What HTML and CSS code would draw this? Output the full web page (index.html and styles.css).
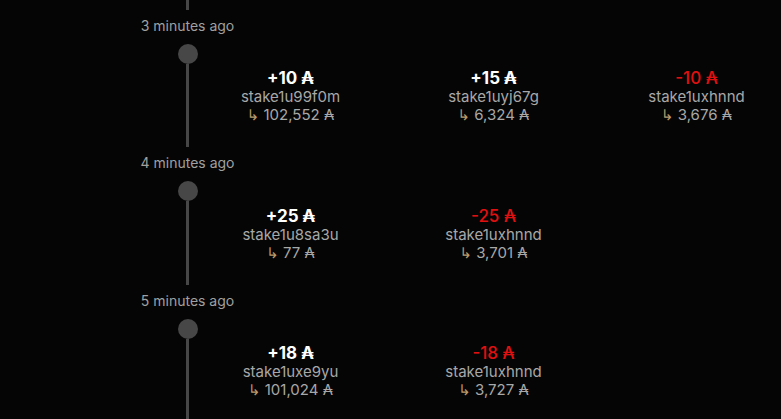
FILE: index.html
```html
<!DOCTYPE html>
<html>
  <head>
    <meta charset="UTF-8" />
    <meta name="viewport" content="width=device-width, initial-scale=1.0" />
    <title>Transfers</title>
    <link rel="stylesheet" href="styles.css">
  </head>
  <body>
    <section class="feed">
      <div class="tail"></div>

      <div class="event">
        <div class="stamp">3 minutes ago</div>
        <div class="body">
          <div class="rail"><div class="dot"></div><div class="line"></div></div>
          <div class="txs">
            <div class="tx">
              <div class="amount">+10 ₳</div>
              <div class="addr">stake1u99f0m</div>
              <div class="balance"><span class="arrow">↳</span> 102,552 ₳</div>
            </div>
            <div class="tx">
              <div class="amount">+15 ₳</div>
              <div class="addr">stake1uyj67g</div>
              <div class="balance"><span class="arrow">↳</span> 6,324 ₳</div>
            </div>
            <div class="tx">
              <div class="amount neg">-10 ₳</div>
              <div class="addr">stake1uxhnnd</div>
              <div class="balance"><span class="arrow">↳</span> 3,676 ₳</div>
            </div>
          </div>
        </div>
      </div>

      <div class="event">
        <div class="stamp">4 minutes ago</div>
        <div class="body">
          <div class="rail"><div class="dot"></div><div class="line"></div></div>
          <div class="txs">
            <div class="tx">
              <div class="amount">+25 ₳</div>
              <div class="addr">stake1u8sa3u</div>
              <div class="balance"><span class="arrow">↳</span> 77 ₳</div>
            </div>
            <div class="tx">
              <div class="amount neg">-25 ₳</div>
              <div class="addr">stake1uxhnnd</div>
              <div class="balance"><span class="arrow">↳</span> 3,701 ₳</div>
            </div>
          </div>
        </div>
      </div>

      <div class="event">
        <div class="stamp">5 minutes ago</div>
        <div class="body">
          <div class="rail"><div class="dot"></div><div class="line"></div></div>
          <div class="txs">
            <div class="tx">
              <div class="amount">+18 ₳</div>
              <div class="addr">stake1uxe9yu</div>
              <div class="balance"><span class="arrow">↳</span> 101,024 ₳</div>
            </div>
            <div class="tx">
              <div class="amount neg">-18 ₳</div>
              <div class="addr">stake1uxhnnd</div>
              <div class="balance"><span class="arrow">↳</span> 3,727 ₳</div>
            </div>
          </div>
        </div>
      </div>
    </section>
  </body>
</html>
```

FILE: styles.css
```css
* {
  margin: 0;
  padding: 0;
  box-sizing: border-box;
}

html,
body {
  background: #050505;
}

body {
  font-family: Inter, "Noto Sans", sans-serif;
  color: #a6a6a6;
  overflow: hidden;
}

.tail {
  width: 3px;
  height: 9.5px;
  margin-left: 186px;
  background: #474747;
}

.event {
  display: flex;
  flex-direction: column;
}

.stamp {
  width: 375px;
  margin-top: 7px;
  text-align: center;
  font-size: 14px;
  line-height: 17px;
  color: #a0a0a0;
}

.body {
  display: flex;
  margin-top: 10px;
}

.rail {
  width: 3px;
  margin-left: 186px;
  display: flex;
  flex-direction: column;
  align-items: center;
}

.dot {
  width: 20px;
  height: 20px;
  flex-shrink: 0;
  border-radius: 50%;
  background: #474747;
}

.line {
  width: 3px;
  flex: 1;
  background: #474747;
}

.txs {
  display: grid;
  grid-template-columns: repeat(3, 203px);
  padding: 24.5px 0 23px;
}

.tx {
  text-align: center;
}

.amount {
  font-size: 17px;
  font-weight: 700;
  line-height: 20px;
  color: #fff;
}

.amount.neg {
  font-weight: 500;
  color: #e01010;
}

.addr,
.balance {
  font-size: 15px;
  line-height: 18px;
  color: #a8a8a8;
}

.arrow {
  font-family: "DejaVu Sans", sans-serif;
  color: #b99a6c;
}
```
